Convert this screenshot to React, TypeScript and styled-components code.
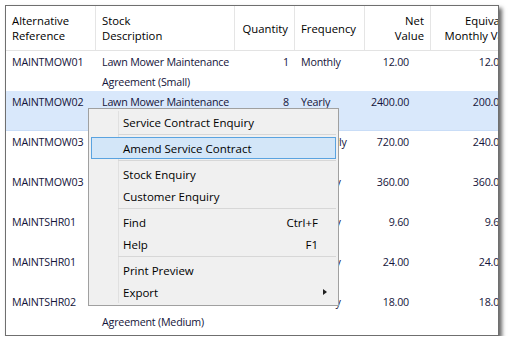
import React from "react";
import styled, { createGlobalStyle } from "styled-components";

const GlobalStyle = createGlobalStyle`
  body {
    margin: 0;
    background: #ffffff;
    font-family: "Open Sans", "Noto Sans", sans-serif;
  }
`;

type Align = "left" | "right";

interface Column {
  title: string[];
  width: number;
  align: Align;
  padRight: number;
}

const columns: Column[] = [
  { title: ["Alternative", "Reference"], width: 90, align: "left", padRight: 0 },
  { title: ["Stock", "Description"], width: 139, align: "left", padRight: 0 },
  { title: ["Quantity"], width: 60, align: "right", padRight: 6 },
  { title: ["Frequency"], width: 70, align: "left", padRight: 0 },
  { title: ["Net", "Value"], width: 66, align: "right", padRight: 22 },
  { title: ["Equivalent", "Monthly Value"], width: 96, align: "right", padRight: 22 },
];

// description text is split where the grid wraps it
const rows: (string | string[])[][] = [
  ["MAINTMOW01", ["Lawn Mower Maintenance", "Agreement (Small)"], "1", "Monthly", "12.00", "12.00"],
  ["MAINTMOW02", ["Lawn Mower Maintenance", "Agreement (Large)"], "8", "Yearly", "2400.00", "200.00"],
  ["MAINTMOW03", ["Lawn Mower Maintenance", "Agreement (Commercial)"], "3", "Quarterly", "720.00", "240.00"],
  ["MAINTMOW03", ["Lawn Mower Maintenance", "Agreement (Commercial)"], "1", "Monthly", "360.00", "360.00"],
  ["MAINTSHR01", ["Shredder Maintenance", "Agreement (Small)"], "1", "Monthly", "9.60", "9.60"],
  ["MAINTSHR01", ["Shredder Maintenance", "Agreement (Small)"], "2", "Monthly", "24.00", "24.00"],
  ["MAINTSHR02", ["Shredder Maintenance", "Agreement (Medium)"], "1", "Monthly", "18.00", "18.00"],
];

const gridTemplate = columns.map((c) => `${c.width}px`).join(" ");

type MenuEntry =
  | { kind: "item"; label: string; shortcut?: string; sub?: boolean; active?: boolean }
  | { kind: "sep" };

const menu: MenuEntry[] = [
  { kind: "item", label: "Service Contract Enquiry" },
  { kind: "sep" },
  { kind: "item", label: "Amend Service Contract", active: true },
  { kind: "sep" },
  { kind: "item", label: "Stock Enquiry" },
  { kind: "item", label: "Customer Enquiry" },
  { kind: "sep" },
  { kind: "item", label: "Find", shortcut: "Ctrl+F" },
  { kind: "item", label: "Help", shortcut: "F1" },
  { kind: "sep" },
  { kind: "item", label: "Print Preview" },
  { kind: "item", label: "Export", sub: true },
];

const App = (): JSX.Element => {
  return (
    <>
      <GlobalStyle />
      <Page>
        <Window>
          <HeaderRow>
            {columns.map((c, i) => (
              <HeaderCell key={i} $align={c.align}>
                <span>
                  {c.title.map((t, j) => (
                    <div key={j}>{t}</div>
                  ))}
                </span>
              </HeaderCell>
            ))}
          </HeaderRow>
          {rows.map((r, i) => (
            <DataRow key={i} $selected={i === 1}>
              {r.map((v, j) => (
                <DataCell key={j} $align={columns[j].align} $padRight={columns[j].padRight}>
                  {Array.isArray(v) ? v.map((line, k) => <div key={k}>{line}</div>) : v}
                </DataCell>
              ))}
            </DataRow>
          ))}
          <Menu>
            {menu.map((m, i) =>
              m.kind === "sep" ? (
                <Separator key={i} />
              ) : (
                <MenuItem key={i} $active={!!m.active}>
                  <span>{m.label}</span>
                  {m.shortcut && <span>{m.shortcut}</span>}
                  {m.sub && <SubArrow />}
                </MenuItem>
              )
            )}
          </Menu>
        </Window>
      </Page>
    </>
  );
};

export default App;

const Page = styled.div`
  padding: 5px 0 0 5px;
`;

const Window = styled.div`
  position: relative;
  box-sizing: border-box;
  width: 494px;
  height: 331px;
  border: 1px solid #6f6f6f;
  background: #ffffff;
  overflow: hidden;
  box-shadow: 3px 3px 4px rgba(0, 0, 0, 0.6);
`;

const HeaderRow = styled.div`
  display: grid;
  grid-template-columns: ${gridTemplate};
  height: 44px;
  border-bottom: 1px solid #e3e3e3;
  color: #000000;
  font-size: 11.3px;
  line-height: 15px;
`;

const HeaderCell = styled.div<{ $align: Align }>`
  display: flex;
  align-items: center;
  justify-content: ${(p) => (p.$align === "right" ? "flex-end" : "flex-start")};
  text-align: ${(p) => p.$align};
  padding: 0 6px;
  border-right: 1px solid #e5e5e5;
  white-space: nowrap;
  overflow: hidden;
`;

const DataRow = styled.div<{ $selected: boolean }>`
  display: grid;
  grid-template-columns: ${gridTemplate};
  height: 40px;
  box-sizing: border-box;
  background: ${(p) => (p.$selected ? "#d9e8fb" : "transparent")};
  border-bottom: 1px solid ${(p) => (p.$selected ? "#c9ddf7" : "transparent")};
  color: #14143a;
  font-size: 10.7px;
  letter-spacing: -0.2px;
  line-height: 20px;
`;

const DataCell = styled.div<{ $align: Align; $padRight: number }>`
  padding: 1px ${(p) => p.$padRight}px 0 6px;
  text-align: ${(p) => p.$align};
  white-space: nowrap;
  overflow: hidden;
`;

const Menu = styled.div`
  position: absolute;
  left: 82px;
  top: 102px;
  width: 251px;
  box-sizing: border-box;
  padding: 2px;
  border: 1px solid #a0a0a0;
  background: #f0f0f0;
  color: #000000;
  font-size: 11.5px;

  &::before {
    content: "";
    position: absolute;
    left: 29px;
    top: 2px;
    bottom: 2px;
    width: 1px;
    background: #e0e0e0;
  }
`;

const MenuItem = styled.div<{ $active: boolean }>`
  position: relative;
  display: flex;
  align-items: center;
  justify-content: space-between;
  box-sizing: border-box;
  height: 22px;
  padding: 0 17px 0 31px;
  border: 1px solid ${(p) => (p.$active ? "#5aa3e0" : "transparent")};
  background: ${(p) => (p.$active ? "#d3e6f8" : "transparent")};
  white-space: nowrap;
`;

const Separator = styled.div`
  position: relative;
  margin: 1px 0 2px 27px;
  border-top: 1px solid #d7d7d7;
`;

const SubArrow = styled.span`
  width: 0;
  height: 0;
  margin-right: -9px;
  border-left: 4px solid #202020;
  border-top: 3.5px solid transparent;
  border-bottom: 3.5px solid transparent;
`;
